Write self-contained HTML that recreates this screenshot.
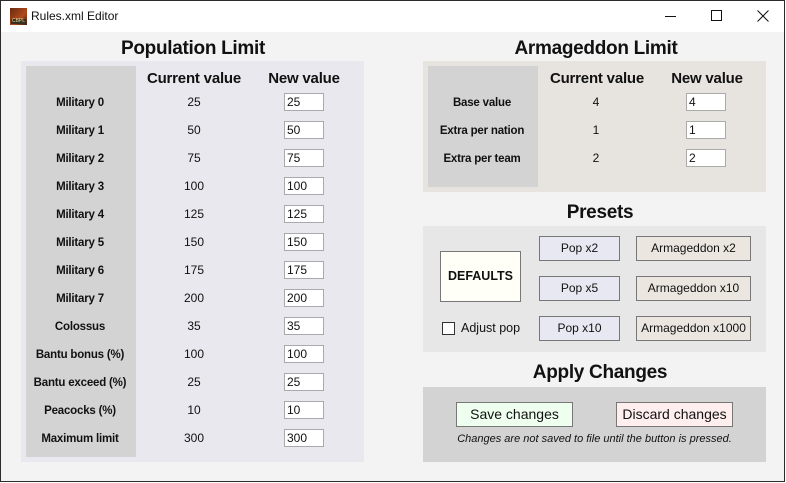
<!DOCTYPE html>
<html><head><meta charset="utf-8"><style>
*{box-sizing:border-box;margin:0;padding:0}
body{width:786px;height:483px;background:#fff;position:relative;overflow:hidden;font-family:"Liberation Sans",sans-serif;color:#111}
.win{position:absolute;left:0;top:0;width:785px;height:482px;border:1px solid #2b2b2b;background:#f3f3f3}
.tb{position:absolute;left:0;top:0;width:783px;height:31px;background:#fff}
.a{position:absolute}
.h{position:absolute;font-size:19px;font-weight:bold;text-align:center;width:300px;letter-spacing:-0.3px}
.hd{position:absolute;font-size:15px;font-weight:bold;text-align:center;width:120px;color:#111;letter-spacing:-0.2px}
.lb{position:absolute;font-size:11.5px;font-weight:bold;text-align:center;width:110px;letter-spacing:-0.2px;margin-top:2px}
.v{position:absolute;font-size:12px;text-align:center;width:60px}
.in{position:absolute;width:40px;height:18px;background:#fff;border:1px solid #aaa;font-size:12px;padding-left:2px;line-height:16px}
.btn{position:absolute;border:1px solid #777;font-size:12px;text-align:center}
</style></head><body>
<div class="win">
<div class="tb">
 <div class="a" style="left:9px;top:7px;width:17px;height:17px;background:linear-gradient(135deg,#6a2a10,#b04a1a 60%,#3a2010);"></div>
 <div class="a" style="left:10px;top:18px;width:15px;height:5px;background:#3a3020;font-size:5px;color:#e8d8a0;line-height:5px;text-align:center">CBPL</div>
 <div class="a" style="left:30px;top:8px;font-size:12px">Rules.xml Editor</div>
 <div class="a" style="left:664px;top:15px;width:11px;height:1px;background:#111"></div>
 <div class="a" style="left:710px;top:9px;width:11px;height:11px;border:1px solid #111"></div>
 <svg class="a" style="left:756px;top:9px" width="12" height="12"><path d="M0.5 0.5L11.5 11.5M11.5 0.5L0.5 11.5" stroke="#111" stroke-width="1"/></svg>
</div>

<div class="h" style="left:42px;top:37px">Population Limit</div>
<div class="a" style="left:20px;top:60px;width:343px;height:401px;background:#e8e8ee"></div>
<div class="a" style="left:25px;top:65px;width:110px;height:391px;background:#d3d3d3"></div>
<div class="hd" style="left:133px;top:69px">Current value</div>
<div class="hd" style="left:243px;top:69px">New value</div>

<div class="h" style="left:445px;top:37px">Armageddon Limit</div>
<div class="a" style="left:422px;top:60px;width:343px;height:131px;background:#e7e4df"></div>
<div class="a" style="left:427px;top:65px;width:110px;height:121px;background:#d3d3d3"></div>
<div class="hd" style="left:536px;top:69px">Current value</div>
<div class="hd" style="left:646px;top:69px">New value</div>

<div class="h" style="left:449px;top:201px">Presets</div>
<div class="a" style="left:422px;top:225px;width:343px;height:126px;background:#e7e7e7"></div>
<div class="btn" style="left:439px;top:250px;width:81px;height:51px;background:#fffff8;line-height:49px;font-weight:bold;font-size:12.5px">DEFAULTS</div>
<div class="btn" style="left:538px;top:235px;width:81px;height:25px;background:#e8e8f2;line-height:23px">Pop x2</div>
<div class="btn" style="left:538px;top:275px;width:81px;height:25px;background:#e8e8f2;line-height:23px">Pop x5</div>
<div class="btn" style="left:538px;top:315px;width:81px;height:25px;background:#e8e8f2;line-height:23px">Pop x10</div>
<div class="btn" style="left:635px;top:235px;width:115px;height:25px;background:#ebe6e0;line-height:23px">Armageddon x2</div>
<div class="btn" style="left:635px;top:275px;width:115px;height:25px;background:#ebe6e0;line-height:23px">Armageddon x10</div>
<div class="btn" style="left:635px;top:315px;width:115px;height:25px;background:#ebe6e0;line-height:23px">Armageddon x1000</div>
<div class="a" style="left:441px;top:321px;width:13px;height:13px;background:#fff;border:1px solid #333"></div>
<div class="a" style="left:460px;top:320px;font-size:12.5px">Adjust pop</div>

<div class="h" style="left:449px;top:361px">Apply Changes</div>
<div class="a" style="left:422px;top:386px;width:343px;height:75px;background:#d3d3d3"></div>
<div class="btn" style="left:455px;top:401px;width:117px;height:25px;background:#efffef;line-height:23px;font-size:14px">Save changes</div>
<div class="btn" style="left:615px;top:401px;width:117px;height:25px;background:#ffeeee;line-height:23px;font-size:14px">Discard changes</div>
<div class="a" style="left:422px;top:432px;width:343px;text-align:center;font-size:11px;font-style:italic">Changes are not saved to file until the button is pressed.</div>
</div>
<div style="position:absolute;left:0;top:0">
<div class="lb" style="left:25px;top:95px">Military 0</div><div class="v" style="left:164px;top:95px">25</div><div class="in" style="left:284px;top:93px">25</div>
<div class="lb" style="left:25px;top:123px">Military 1</div><div class="v" style="left:164px;top:123px">50</div><div class="in" style="left:284px;top:121px">50</div>
<div class="lb" style="left:25px;top:151px">Military 2</div><div class="v" style="left:164px;top:151px">75</div><div class="in" style="left:284px;top:149px">75</div>
<div class="lb" style="left:25px;top:179px">Military 3</div><div class="v" style="left:164px;top:179px">100</div><div class="in" style="left:284px;top:177px">100</div>
<div class="lb" style="left:25px;top:207px">Military 4</div><div class="v" style="left:164px;top:207px">125</div><div class="in" style="left:284px;top:205px">125</div>
<div class="lb" style="left:25px;top:235px">Military 5</div><div class="v" style="left:164px;top:235px">150</div><div class="in" style="left:284px;top:233px">150</div>
<div class="lb" style="left:25px;top:263px">Military 6</div><div class="v" style="left:164px;top:263px">175</div><div class="in" style="left:284px;top:261px">175</div>
<div class="lb" style="left:25px;top:291px">Military 7</div><div class="v" style="left:164px;top:291px">200</div><div class="in" style="left:284px;top:289px">200</div>
<div class="lb" style="left:25px;top:319px">Colossus</div><div class="v" style="left:164px;top:319px">35</div><div class="in" style="left:284px;top:317px">35</div>
<div class="lb" style="left:25px;top:347px">Bantu bonus (%)</div><div class="v" style="left:164px;top:347px">100</div><div class="in" style="left:284px;top:345px">100</div>
<div class="lb" style="left:25px;top:375px">Bantu exceed (%)</div><div class="v" style="left:164px;top:375px">25</div><div class="in" style="left:284px;top:373px">25</div>
<div class="lb" style="left:25px;top:403px">Peacocks (%)</div><div class="v" style="left:164px;top:403px">10</div><div class="in" style="left:284px;top:401px">10</div>
<div class="lb" style="left:25px;top:431px">Maximum limit</div><div class="v" style="left:164px;top:431px">300</div><div class="in" style="left:284px;top:429px">300</div>
<div class="lb" style="left:427px;top:95px">Base value</div><div class="v" style="left:566px;top:95px">4</div><div class="in" style="left:686px;top:93px">4</div>
<div class="lb" style="left:427px;top:123px">Extra per nation</div><div class="v" style="left:566px;top:123px">1</div><div class="in" style="left:686px;top:121px">1</div>
<div class="lb" style="left:427px;top:151px">Extra per team</div><div class="v" style="left:566px;top:151px">2</div><div class="in" style="left:686px;top:149px">2</div>
</div>
</body></html>
